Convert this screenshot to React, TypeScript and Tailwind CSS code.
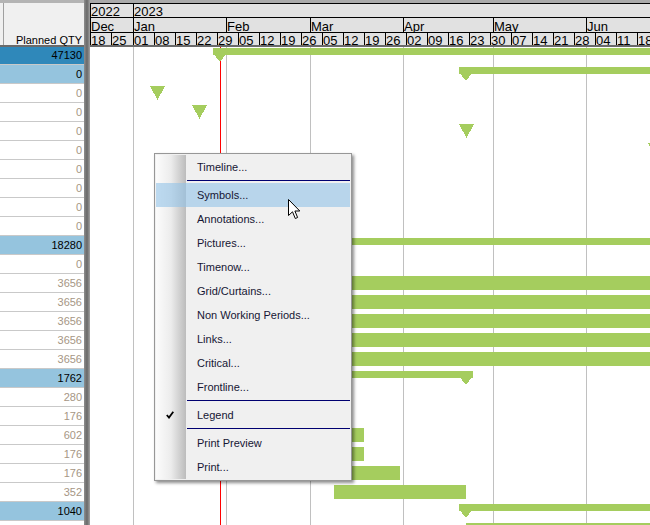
import React from 'react';

// Timeline scale: pixels per day and the chart x of 2023-01-01
const DAY_PX = 3.005;
const X_JAN1 = 42.5;
const CHART_W = 560;
const FAR = 400; // a day well past the right edge
const TIMENOW = 29;

const dayOf = (y: number, m: number, d: number) =>
  Math.round((Date.UTC(y, m, d) - Date.UTC(2023, 0, 1)) / 86400000);
const xOf = (day: number) => Math.round(X_JAN1 + day * DAY_PX);

interface Cell {
  label: string;
  start: number;
  end: number;
}

const toSpans = (cells: Cell[]) =>
  cells.map((c) => {
    const left = Math.max(0, xOf(c.start));
    return { ...c, left, width: Math.min(xOf(c.end), CHART_W + 40) - left };
  });

const years = toSpans([
  { label: '2022', start: -14, end: 0 },
  { label: '2023', start: 0, end: FAR },
]);

const MONTHS = ['Dec', 'Jan', 'Feb', 'Mar', 'Apr', 'May', 'Jun', 'Jul'];
const months = toSpans(
  MONTHS.map((label, i) => ({
    label,
    start: dayOf(2022, 11 + i, 1),
    end: dayOf(2022, 12 + i, 1),
  }))
);

const weeks = toSpans(
  Array.from({ length: 28 }, (_, k) => {
    const date = new Date(Date.UTC(2022, 11, 18 + 7 * k));
    return {
      label: String(date.getUTCDate()).padStart(2, '0'),
      start: -14 + 7 * k,
      end: -7 + 7 * k,
    };
  })
);

type Tone = 'top' | 'sum' | 'task';

interface Bar {
  kind: 'summary' | 'task' | 'milestone';
  start: number;
  end?: number;
}

interface Row {
  qty: number;
  tone: Tone;
  bar?: Bar;
}

const rows: Row[] = [
  { qty: 47130, tone: 'top', bar: { kind: 'summary', start: 29, end: FAR } },
  { qty: 0, tone: 'sum', bar: { kind: 'summary', start: 111, end: FAR } },
  { qty: 0, tone: 'task', bar: { kind: 'milestone', start: 8 } },
  { qty: 0, tone: 'task', bar: { kind: 'milestone', start: 22 } },
  { qty: 0, tone: 'task', bar: { kind: 'milestone', start: 111 } },
  { qty: 0, tone: 'task', bar: { kind: 'milestone', start: 174 } },
  { qty: 0, tone: 'task' },
  { qty: 0, tone: 'task' },
  { qty: 0, tone: 'task' },
  { qty: 0, tone: 'task' },
  { qty: 18280, tone: 'sum', bar: { kind: 'summary', start: 40, end: FAR } },
  { qty: 0, tone: 'task' },
  { qty: 3656, tone: 'task', bar: { kind: 'task', start: 40, end: FAR } },
  { qty: 3656, tone: 'task', bar: { kind: 'task', start: 40, end: FAR } },
  { qty: 3656, tone: 'task', bar: { kind: 'task', start: 40, end: FAR } },
  { qty: 3656, tone: 'task', bar: { kind: 'task', start: 40, end: FAR } },
  { qty: 3656, tone: 'task', bar: { kind: 'task', start: 40, end: FAR } },
  { qty: 1762, tone: 'sum', bar: { kind: 'summary', start: 45, end: 111 } },
  { qty: 280, tone: 'task', bar: { kind: 'task', start: 45, end: 60 } },
  { qty: 176, tone: 'task', bar: { kind: 'task', start: 50, end: 70 } },
  { qty: 602, tone: 'task', bar: { kind: 'task', start: 50, end: 77 } },
  { qty: 176, tone: 'task', bar: { kind: 'task', start: 55, end: 77 } },
  { qty: 176, tone: 'task', bar: { kind: 'task', start: 60, end: 89 } },
  { qty: 352, tone: 'task', bar: { kind: 'task', start: 67, end: 111 } },
  { qty: 1040, tone: 'sum', bar: { kind: 'summary', start: 111, end: FAR } },
  { qty: 176, tone: 'task', bar: { kind: 'task', start: 111, end: FAR } },
];

const toneClass: Record<Tone, string> = {
  top: 'bg-[#2f88ba] text-black',
  sum: 'bg-[#95c4de] text-black',
  task: 'bg-white text-[#a69684]',
};

type MenuEntry = { label: string; active?: boolean; checked?: boolean } | 'sep';

const menu: MenuEntry[] = [
  { label: 'Timeline...' },
  'sep',
  { label: 'Symbols...', active: true },
  { label: 'Annotations...' },
  { label: 'Pictures...' },
  { label: 'Timenow...' },
  { label: 'Grid/Curtains...' },
  { label: 'Non Working Periods...' },
  { label: 'Links...' },
  { label: 'Critical...' },
  { label: 'Frontline...' },
  'sep',
  { label: 'Legend', checked: true },
  'sep',
  { label: 'Print Preview' },
  { label: 'Print...' },
];

const GREEN = '#a5cd5e';

const HeaderRow: React.FC<{
  cells: ReturnType<typeof toSpans>;
  className: string;
  pad: string;
}> = ({ cells, className, pad }) => (
  <div className={`flex overflow-hidden bg-[#e1e1e1] ${className}`}>
    {cells.map((c) => (
      <div
        key={c.label + c.start}
        className={`shrink-0 overflow-hidden border-l border-black text-[13px] leading-[13px] text-black ${pad}`}
        style={{ width: c.width }}
      >
        {c.label}
      </div>
    ))}
  </div>
);

const GanttBar: React.FC<{ bar: Bar; top: number }> = ({ bar, top }) => {
  const x0 = xOf(bar.start);
  if (bar.kind === 'milestone') {
    return (
      <svg
        className="absolute"
        style={{ left: x0 - 7, top: top + 2 }}
        width="15"
        height="14"
        viewBox="0 0 15 14"
        shapeRendering="crispEdges"
      >
        <polygon points="0,0 15,0 7.5,14" fill={GREEN} />
      </svg>
    );
  }
  const x1 = xOf(bar.end ?? bar.start);
  if (bar.kind === 'task') {
    return (
      <div
        className="absolute h-[14px] bg-[#a5cd5e]"
        style={{ left: x0, top: top + 2, width: x1 - x0 }}
      />
    );
  }
  return (
    <>
      <div
        className="absolute h-[7px] bg-[#a5cd5e]"
        style={{ left: x0 - 7, top: top + 2, width: x1 - x0 + 14 }}
      />
      {[x0, x1].map((x) => (
        <svg
          key={x}
          className="absolute"
          style={{ left: x - 7, top: top + 2 }}
          width="14"
          height="14"
          viewBox="0 0 14 14"
          shapeRendering="crispEdges"
        >
          <polygon points="0,0 14,0 14,5 7,14 0,5" fill={GREEN} />
        </svg>
      ))}
    </>
  );
};

const ContextMenu: React.FC = () => (
  <div className="absolute left-[154px] top-[153px] h-[328px] w-[198px] border border-[#979797] bg-[#f0f0f0] p-px shadow-[2px_2px_3px_rgba(0,0,0,0.45)]">
    <div className="relative h-full">
      {/* icon gutter */}
      <div className="absolute bottom-0 left-0 top-0 w-[30px] bg-gradient-to-r from-[#fcfcfc] via-[#ececec] to-[#bcbcbc]" />
      <div className="relative flex flex-col">
        {menu.map((item, i) =>
          item === 'sep' ? (
            <div key={i} className="h-[4px] pl-[31px] pt-px">
              <div className="h-px bg-[#000070]" />
            </div>
          ) : (
            <div
              key={i}
              className={`relative flex h-[24px] items-center pl-[41px] text-[11px] text-[#161634] ${
                item.active ? 'bg-[#93c3e8]/60' : ''
              }`}
            >
              {item.checked && (
                <svg className="absolute left-[10px] top-[8px]" width="8" height="8" viewBox="0 0 8 8">
                  <path d="M0.8 4 L3 6.6 L7.3 0.8" fill="none" stroke="#000" strokeWidth="1.8" />
                </svg>
              )}
              {item.label}
            </div>
          )
        )}
      </div>
    </div>
  </div>
);

export default function App() {
  return (
    <div className="relative flex h-[525px] w-[650px] overflow-hidden bg-white font-['Liberation_Sans',Arial,sans-serif]">
      {/* Quantity column */}
      <div className="flex w-[84px] shrink-0 flex-col">
        <div className="flex h-[47px] flex-col border-b-2 border-[#6a6a6a] bg-[#f0f0f0]">
          <div className="h-[3px] bg-[#b4b4b4]" />
          <div className="flex flex-1">
            <div className="w-[3px]" />
            <div className="w-px bg-[#a0a0a0]" />
            <div className="flex flex-1 items-end justify-end pr-[2px] text-[11px] leading-[9px] text-black">
              Planned QTY
            </div>
          </div>
        </div>
        <div className="flex-1 overflow-hidden">
          {rows.map((r, i) => (
            <div
              key={i}
              className={`border-b border-[#c9c9c9] pr-[2px] text-right text-[11px] ${
                i === 0 ? 'h-[18px] leading-[17px]' : 'h-[19px] leading-[18px]'
              } ${toneClass[r.tone]}`}
            >
              {r.qty}
            </div>
          ))}
        </div>
      </div>

      {/* Splitter */}
      <div className="w-[6px] shrink-0 bg-gradient-to-r from-[#8e8e8e] via-[#696969] to-[#a3a3a3]" />

      {/* Gantt */}
      <div className="flex w-[560px] shrink-0 flex-col">
        <div className="h-[3px] bg-[#a9a9a9]" />
        <HeaderRow cells={years} className="h-[15px] border-y border-black" pad="pt-px" />
        <HeaderRow cells={months} className="h-[15px] border-b border-black" pad="pt-[2px]" />
        <HeaderRow cells={weeks} className="h-[14px] border-b-2 border-[#6a6a6a]" pad="pt-px" />
        <div className="relative flex-1 overflow-hidden bg-white">
          {months.slice(1).map((m) => (
            <div
              key={m.label}
              className="absolute bottom-0 top-0 w-px bg-[#c0c0c0]"
              style={{ left: m.left }}
            />
          ))}
          <div className="absolute bottom-0 top-0 w-px bg-[#ff0000]" style={{ left: xOf(TIMENOW) }} />
          {rows.map((r, i) => r.bar && <GanttBar key={i} bar={r.bar} top={19 * i - 1} />)}
        </div>
      </div>

      <ContextMenu />

      {/* mouse pointer */}
      <svg className="absolute left-[288px] top-[199px]" width="13" height="21" viewBox="0 0 13 21">
        <path
          d="M0.5 0.5 V16.5 L4.5 12.8 L7.3 19.5 L9.6 18.5 L6.9 12 H11.8 Z"
          fill="#fff"
          stroke="#000"
          strokeLinejoin="miter"
        />
      </svg>
    </div>
  );
}
